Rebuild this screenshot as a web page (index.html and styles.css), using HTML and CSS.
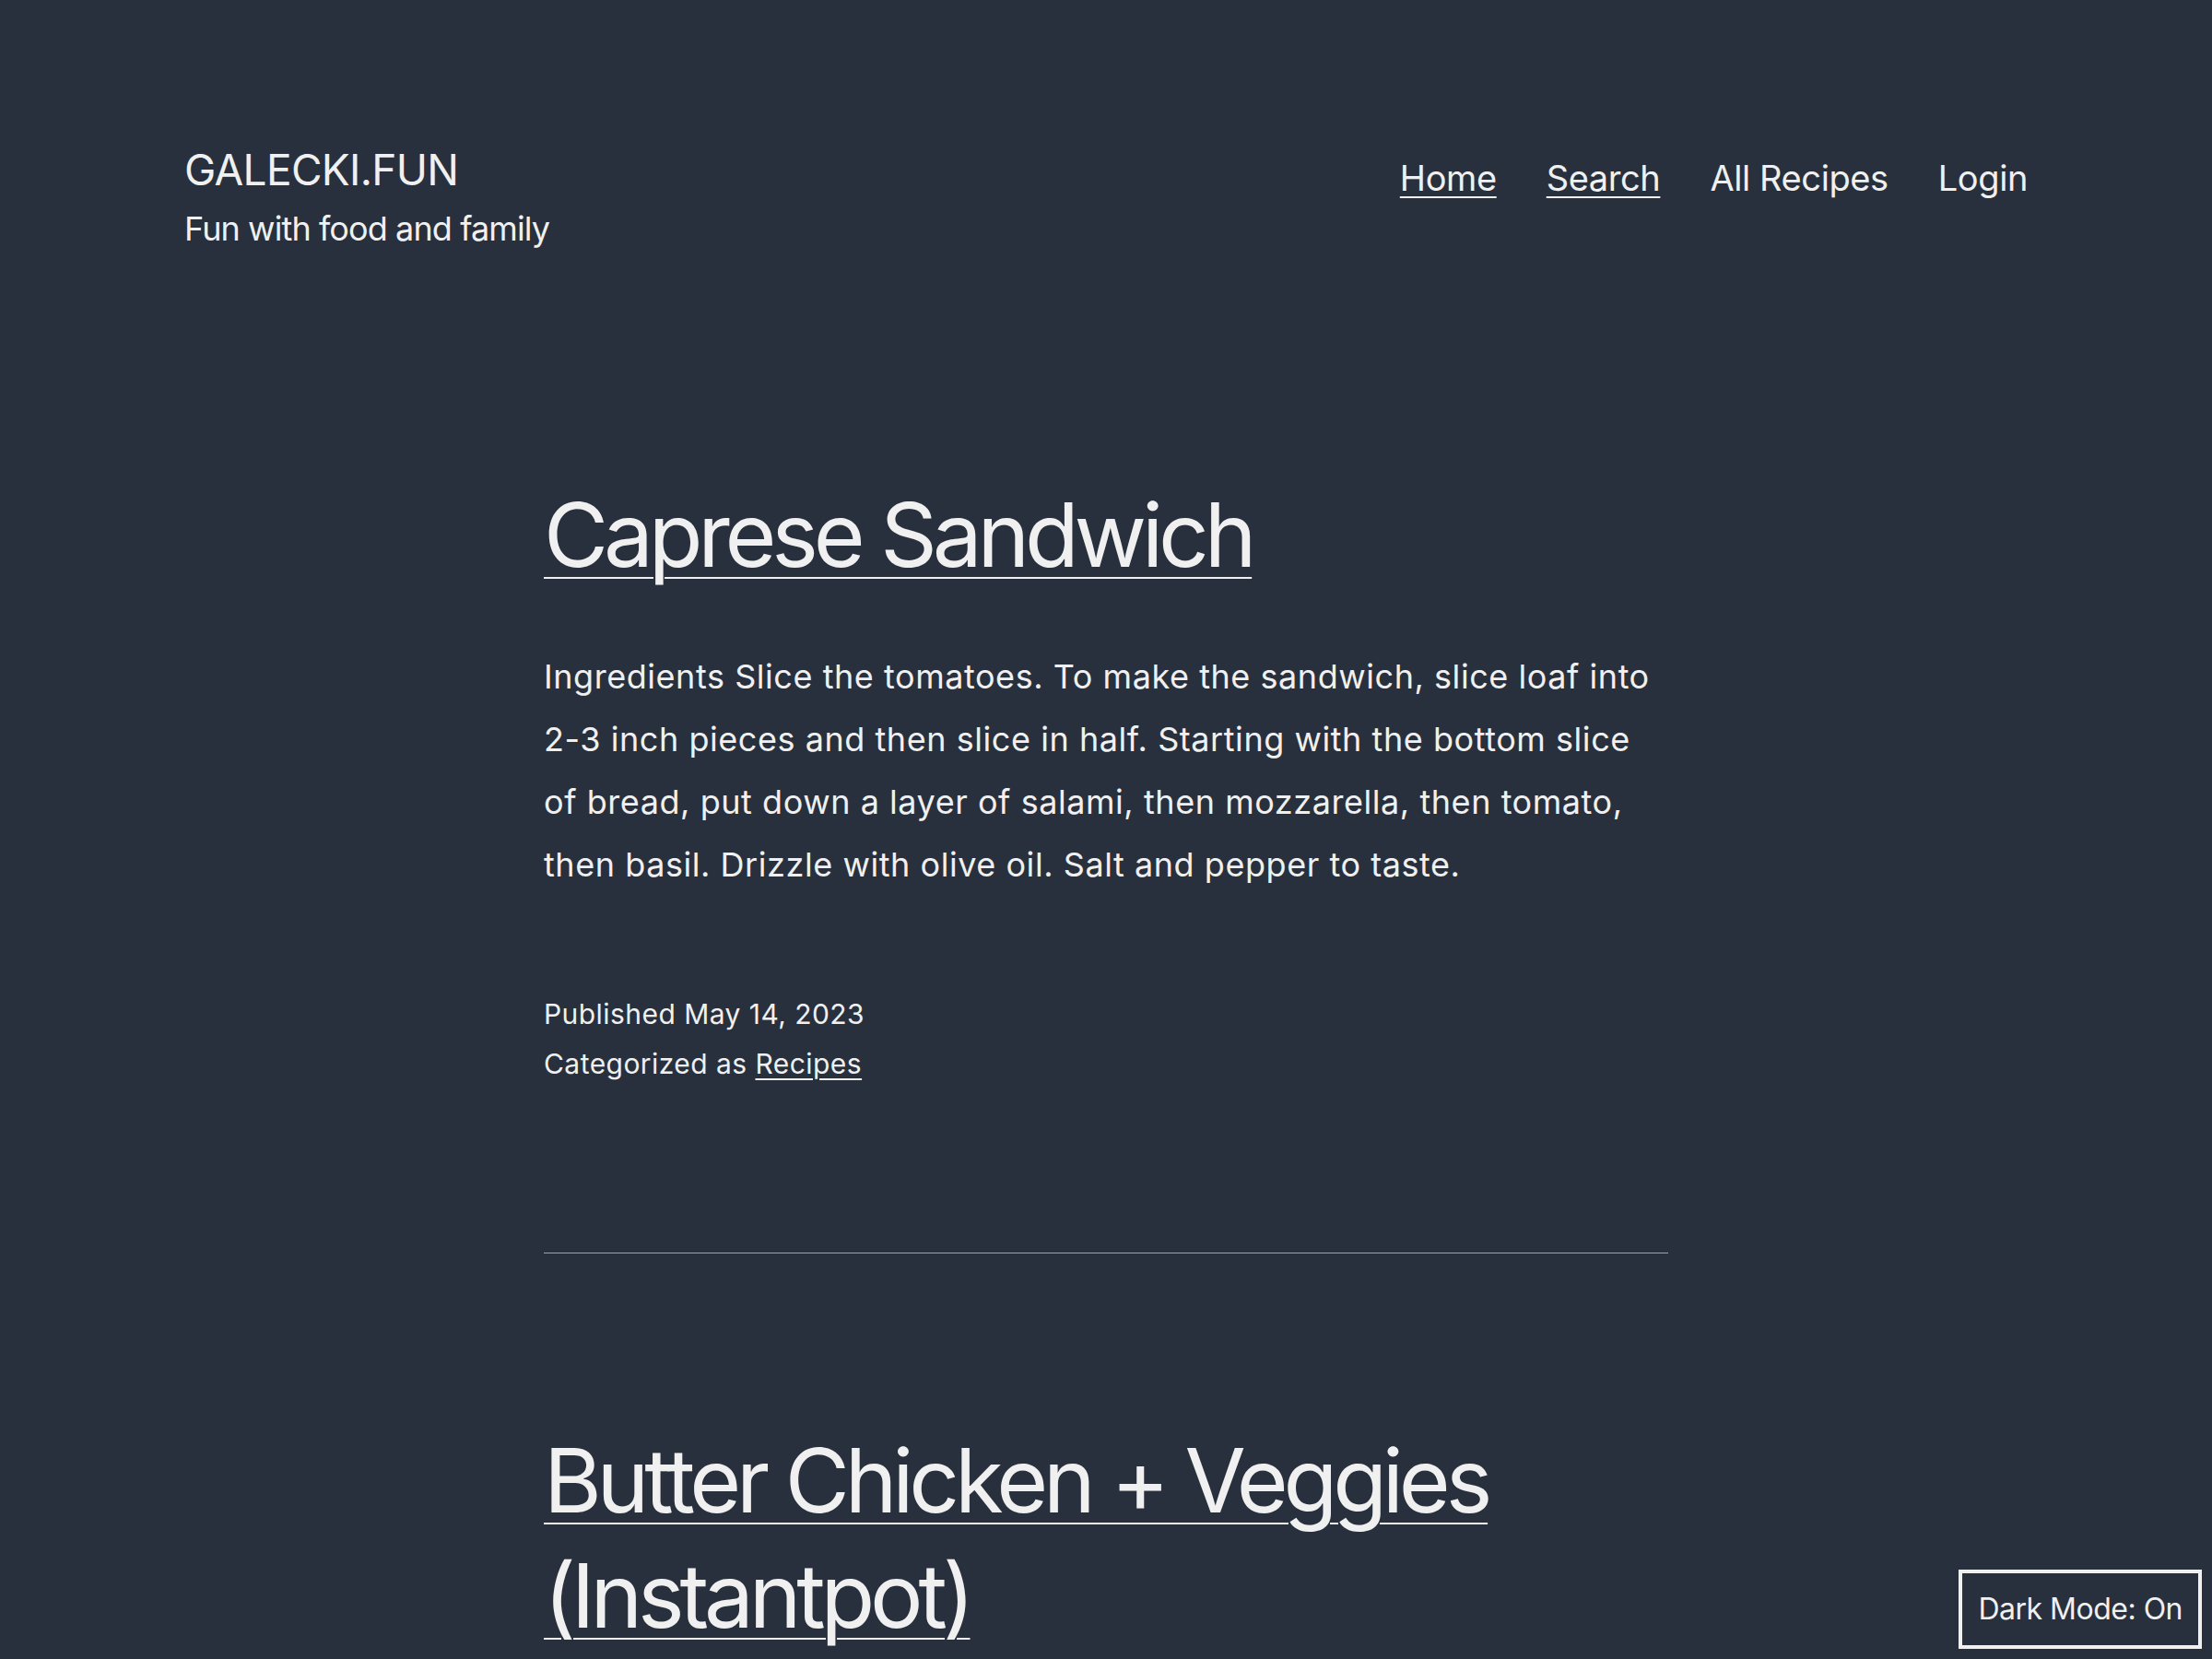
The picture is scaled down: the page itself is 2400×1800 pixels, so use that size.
FILE: index.html
```html
<!DOCTYPE html>
<html lang="en">
<head>
<meta charset="utf-8">
<title>GALECKI.FUN</title>
<link rel="stylesheet" href="styles.css">
</head>
<body>
<header class="site-header">
  <div class="branding">
    <p class="site-title">GALECKI.FUN</p>
    <p class="site-description">Fun with food and family</p>
  </div>
  <nav class="primary-nav">
    <a class="nav-link underline" href="#">Home</a>
    <a class="nav-link underline" href="#">Search</a>
    <a class="nav-link" href="#">All Recipes</a>
    <a class="nav-link" href="#">Login</a>
  </nav>
</header>
<main class="site-main">
  <article class="entry">
    <h2 class="entry-title"><a href="#">Caprese Sandwich</a></h2>
    <p class="entry-summary">Ingredients Slice the tomatoes. To make the sandwich, slice loaf into 2-3 inch pieces and then slice in half. Starting with the bottom slice of bread, put down a layer of salami, then mozzarella, then tomato, then basil. Drizzle with olive oil. Salt and pepper to taste.</p>
    <footer class="entry-footer">
      <div>Published May 14, 2023</div>
      <div>Categorized as <a href="#">Recipes</a></div>
    </footer>
  </article>
  <hr class="separator">
  <article class="entry">
    <h2 class="entry-title"><a href="#">Butter Chicken + Veggies (Instantpot)</a></h2>
  </article>
</main>
<button class="dark-toggle" type="button">Dark Mode: On</button>
</body>
</html>
```
FILE: styles.css
```css
html {
  scrollbar-width: none;
  background: #28303d;
}
body {
  margin: 0;
  background: #28303d;
  color: #f0f0f0;
  font-family: Inter, "Noto Sans", sans-serif;
}
a {
  color: #f0f0f0;
}
p {
  margin: 0;
}

.site-header {
  display: flex;
  justify-content: space-between;
  align-items: flex-start;
  padding: 154px 200px 0;
}
.site-title {
  font-size: 46px;
  line-height: 60px;
  letter-spacing: -0.7px;
  text-transform: uppercase;
}
.site-description {
  margin-top: 10px;
  font-size: 36px;
  line-height: 48px;
  letter-spacing: -0.9px;
}
.primary-nav {
  display: flex;
  gap: 54px;
  margin-top: 14px;
}
.nav-link {
  font-size: 38px;
  line-height: 50px;
  letter-spacing: -0.4px;
  text-decoration: none;
}
.nav-link.underline {
  text-decoration: underline;
  text-decoration-thickness: 2px;
  text-underline-offset: 6px;
}

.site-main {
  width: 1220px;
  margin: 246px auto 0;
}
.entry-title {
  margin: 0;
  font-size: 96px;
  line-height: 125px;
  font-weight: 400;
  letter-spacing: -5.2px;
}
.entry-title a {
  text-decoration: underline;
  text-decoration-thickness: 2px;
  text-underline-offset: 11px;
}
.entry-summary {
  margin-top: 57px;
  font-size: 36px;
  line-height: 68px;
  letter-spacing: 0.55px;
}
.entry-footer {
  margin-top: 101px;
  font-size: 30px;
  line-height: 54px;
  letter-spacing: 0.45px;
}
.entry-footer a {
  text-decoration-thickness: 2px;
  text-underline-offset: 5px;
}
.separator {
  margin: 178px 0 184px;
  border: 0;
  border-top: 1px solid #9ea1a7;
  height: 0;
}

.dark-toggle {
  position: fixed;
  right: 11px;
  bottom: 11px;
  padding: 19px 17px;
  background: #28303d;
  color: #f0f0f0;
  border: 4px solid #f0f0f0;
  border-radius: 0;
  font-family: Inter, "Noto Sans", sans-serif;
  font-size: 32px;
  line-height: 40px;
  letter-spacing: -0.5px;
}
```
